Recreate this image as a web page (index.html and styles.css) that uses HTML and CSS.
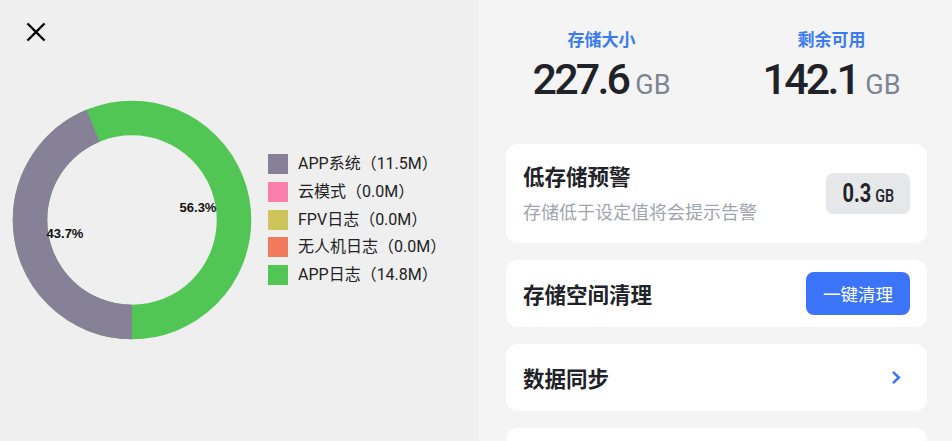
FILE: index.html
```html
<!DOCTYPE html>
<html lang="zh">
<head>
<meta charset="utf-8">
<title>存储</title>
<link rel="stylesheet" href="styles.css">
</head>
<body>
<div class="page">
  <section class="left">
    <svg class="close" width="20" height="20" viewBox="0 0 20 20" aria-label="关闭">
      <path d="M1.5 1.5 L18.5 18.5 M18.5 1.5 L1.5 18.5" stroke="#000" stroke-width="2.4" fill="none"/>
    </svg>
    <div class="chart-row">
      <svg class="donut" width="240" height="240" viewBox="0 0 240 240">
        <circle cx="120" cy="120" r="102" fill="none" stroke="#52c655" stroke-width="34.5"/>
        <circle cx="120" cy="120" r="102" fill="none" stroke="#868196" stroke-width="34.5"
                stroke-dasharray="280.07 640.88" transform="rotate(90 120 120)"/>
        <text class="pct" x="186" y="112" text-anchor="middle">56.3%</text>
        <text class="pct" x="53" y="138" text-anchor="middle">43.7%</text>
      </svg>
      <ul class="legend">
        <li class="legend-item"><span class="swatch sw-gray"></span>APP系统（11.5M）</li>
        <li class="legend-item"><span class="swatch sw-pink"></span>云模式（0.0M）</li>
        <li class="legend-item"><span class="swatch sw-olive"></span>FPV日志（0.0M）</li>
        <li class="legend-item"><span class="swatch sw-orange"></span>无人机日志（0.0M）</li>
        <li class="legend-item"><span class="swatch sw-green"></span>APP日志（14.8M）</li>
      </ul>
    </div>
  </section>
  <section class="right">
    <div class="stats">
      <div class="stat">
        <div class="stat-label">存储大小</div>
        <div class="stat-value"><span class="big">227.6</span><span class="unit">GB</span></div>
      </div>
      <div class="stat">
        <div class="stat-label">剩余可用</div>
        <div class="stat-value"><span class="big">142.1</span><span class="unit">GB</span></div>
      </div>
    </div>
    <div class="cards">
      <div class="card card-tall">
        <div class="card-text">
          <div class="card-title">低存储预警</div>
          <div class="card-sub">存储低于设定值将会提示告警</div>
        </div>
        <div class="badge"><span class="badge-inner"><span class="badge-num">0.3</span><span class="badge-unit">GB</span></span></div>
      </div>
      <div class="card">
        <div class="card-title">存储空间清理</div>
        <button class="btn">一键清理</button>
      </div>
      <div class="card">
        <div class="card-title">数据同步</div>
        <svg class="chev" width="10" height="15" viewBox="0 0 10 15">
          <path d="M2 1.8 L7.8 7.5 L2 13.2" stroke="#3b74f8" stroke-width="2.5" fill="none"/>
        </svg>
      </div>
      <div class="card"></div>
    </div>
  </section>
</div>
</body>
</html>
```
FILE: styles.css
```css
* { box-sizing: border-box; }
html, body { margin: 0; padding: 0; }
body {
  width: 952px;
  height: 441px;
  overflow: hidden;
  font-family: Roboto, "Noto Sans CJK SC", sans-serif;
}
.page {
  display: flex;
  height: 441px;
}
.left {
  width: 478px;
  background: #efefef;
  padding-left: 12px;
}
.close {
  display: block;
  margin: 22px 0 0 14px;
}
.chart-row {
  display: flex;
  align-items: center;
  gap: 16px;
  margin-top: 57.5px;
}
.donut { display: block; flex: none; }
.pct {
  font-family: "Liberation Sans", Arial, sans-serif;
  font-weight: 700;
  font-size: 13px;
  fill: #111;
}
.legend {
  list-style: none;
  margin: 0;
  padding: 0;
  display: flex;
  flex-direction: column;
  gap: 7.75px;
}
.legend-item {
  display: flex;
  align-items: center;
  gap: 10px;
  font-size: 16px;
  line-height: 20px;
  color: #222;
}
.swatch { width: 20px; height: 20px; flex: none; }
.sw-gray { background: #868196; }
.sw-pink { background: #fa80ab; }
.sw-olive { background: #cdc55b; }
.sw-orange { background: #f07a5b; }
.sw-green { background: #52c655; }

.right {
  flex: 1;
  background: #f4f4f4;
  padding: 29px 25px 0 28px;
  overflow: hidden;
}
.stats {
  display: flex;
  justify-content: center;
  gap: 39px;
}
.stat {
  width: 200px;
  display: flex;
  flex-direction: column;
  align-items: center;
}
.stat-label {
  font-size: 17px;
  line-height: 22px;
  font-weight: 700;
  color: #3c7af0;
}
.stat-value {
  display: flex;
  align-items: baseline;
  margin-top: 6px;
  line-height: 44px;
}
.big {
  font-size: 43px;
  font-weight: 500;
  color: #1f2329;
  letter-spacing: -2.8px;
}
.unit {
  font-size: 27px;
  color: #7b8491;
  margin-left: 7px;
}
.cards {
  display: flex;
  flex-direction: column;
  gap: 17px;
  margin-top: 37px;
}
.card {
  background: #fff;
  border-radius: 12px;
  height: 67px;
  padding: 0 17px;
  display: flex;
  align-items: center;
  justify-content: space-between;
  flex: none;
}
.card-tall { height: 99px; }
.card-title {
  font-size: 21.5px;
  line-height: 28px;
  font-weight: 700;
  color: #1f2329;
  padding-top: 4px;
}
.card-text { padding-top: 2px; }
.card-text .card-title { padding-top: 0; }
.card-sub {
  font-size: 18px;
  line-height: 26px;
  color: #a0a5ad;
  margin-top: 8px;
}
.badge {
  width: 84px;
  height: 41px;
  border-radius: 7px;
  background: #e6e7e9;
  display: flex;
  align-items: center;
  justify-content: center;
}
.badge-inner {
  display: inline-flex;
  align-items: baseline;
  gap: 5px;
  transform: scaleX(0.8);
  color: #1f2329;
}
.badge-num { font-size: 25px; font-weight: 700; }
.badge-unit { font-size: 18px; font-weight: 500; }
.btn {
  width: 104px;
  height: 43px;
  border: 0;
  border-radius: 8px;
  background: #3b74f8;
  color: #fff;
  font-family: Roboto, "Noto Sans CJK SC", sans-serif;
  font-size: 17.5px;
  padding: 0;
}
.chev { display: block; margin-right: 9px; }
```
